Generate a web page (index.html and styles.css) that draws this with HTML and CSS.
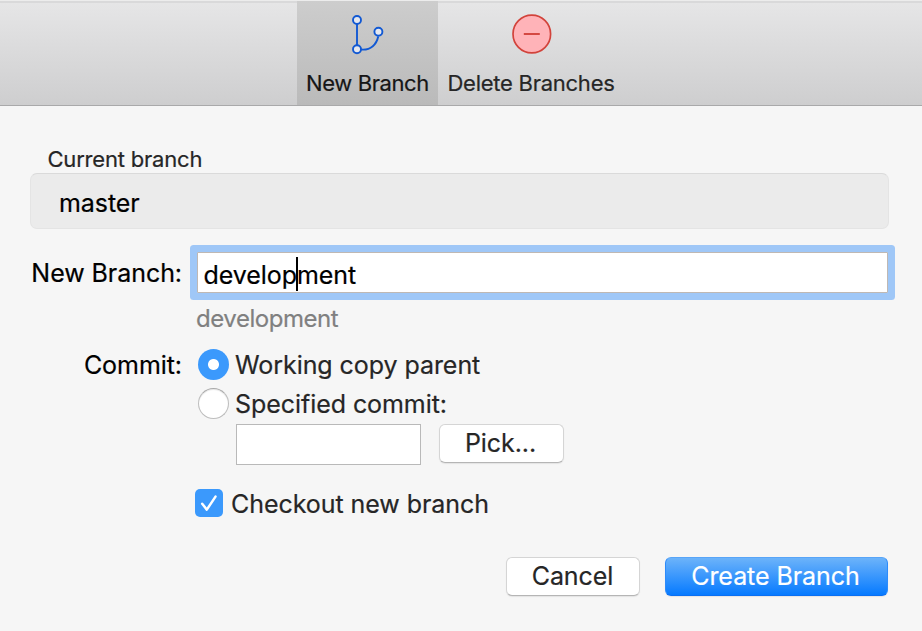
FILE: index.html
```html
<!DOCTYPE html>
<html lang="en">
<head>
<meta charset="utf-8">
<title>New Branch</title>
<link rel="stylesheet" href="styles.css">
</head>
<body>
<header class="toolbar">
  <div class="tab tab-active">
    <svg class="tab-icon" width="40" height="40" viewBox="0 0 40 40" fill="none" stroke="#1259d3" stroke-width="1.9">
      <path d="M9 9.5V34"/>
      <path d="M13 38.5C23 39.5 28.7 33 30.2 25.5"/>
      <g fill="#e6e8ee"><circle cx="9" cy="9" r="4"/><circle cx="9" cy="38.3" r="4"/><circle cx="30.4" cy="20.8" r="4"/></g>
    </svg>
    <span class="tab-label new-label">New Branch</span>
  </div>
  <div class="tab tab-delete">
    <svg class="tab-icon" width="40" height="40" viewBox="0 0 40 40" stroke="#d2433b">
      <circle cx="20.8" cy="20" r="18.8" fill="#ffb3b8" stroke-width="1.7"/>
      <path d="M12.8 20H28.8" stroke-width="1.9"/>
    </svg>
    <span class="tab-label delete-label">Delete Branches</span>
  </div>
</header>
<main class="form">
  <div class="current-label">Current branch</div>
  <div class="current-box"><span class="master">master</span></div>
  <div class="row name-row">
    <div class="label name-label">New Branch:</div>
    <div class="field name-field"><span class="typed">develop<i class="caret"></i>ment</span></div>
  </div>
  <div class="hint">development</div>
  <div class="row">
    <div class="label commit-label">Commit:</div>
    <div class="radio radio-on"></div>
    <div class="option working">Working copy parent</div>
  </div>
  <div class="row second">
    <div class="label"></div>
    <div class="radio"></div>
    <div class="option specified">Specified commit:</div>
  </div>
  <div class="pick-row">
    <div class="field commit-field"></div>
    <div class="button pick"><span>Pick...</span></div>
  </div>
  <div class="check-row">
    <div class="checkbox">
      <svg width="28" height="28" viewBox="0 0 28 28" fill="none" stroke="#fff" stroke-width="2.5" stroke-linecap="round" stroke-linejoin="round"><path d="M7.2 14.8L11.8 20.6L20.5 7.6"/></svg>
    </div>
    <div class="option checkout">Checkout new branch</div>
  </div>
  <div class="actions">
    <div class="button cancel"><span>Cancel</span></div>
    <div class="button create"><span>Create Branch</span></div>
  </div>
</main>
</body>
</html>
```
FILE: styles.css
```css
* { box-sizing: border-box; }
body {
  margin: 0;
  width: 922px;
  height: 631px;
  overflow: hidden;
  background: #f6f6f6;
  font-family: Inter, "Liberation Sans", sans-serif;
  font-size: 25px;
  line-height: 32px;
  letter-spacing: -0.06px;
  -webkit-text-stroke: 0.2px;
  color: #262626;
  white-space: nowrap;
}
.toolbar {
  display: flex;
  height: 106px;
  padding-left: 297px;
  background: linear-gradient(#e6e6e7, #cececf);
  border-top: 1px solid #ececec;
  border-bottom: 1px solid #a9a9aa;
  box-shadow: inset 0 2px 0 #d9d9da;
}
.tab {
  display: flex;
  flex-direction: column;
  align-items: center;
  width: 141px;
  padding-top: 13px;
}
.tab-active { background: linear-gradient(#cdcdcd, #bababa); }
.tab-delete { width: 186px; }
.tab-icon { overflow: visible; }
.tab-active .tab-icon { margin-top: -3px; margin-bottom: 3px; }
.tab-label {
  margin-top: 16px;
  font-size: 22px;
  line-height: 26px;
  letter-spacing: -0.25px;
}
.new-label { color: #161616; letter-spacing: -0.4px; }
.form { padding-top: 40px; }
.current-label {
  padding-left: 47.5px;
  font-size: 22px;
  line-height: 26px;
  letter-spacing: -0.2px;
}
.current-box {
  display: flex;
  align-items: center;
  width: 859px;
  height: 56px;
  margin: 1px 0 0 30px;
  padding: 4px 0 0 28px;
  background: #ebebeb;
  border: 1px solid #e4e4e4;
  border-top-color: #dadada;
  border-radius: 7px;
  color: #000;
}
.row { display: flex; align-items: center; }
.label {
  width: 182px;
  text-align: right;
  color: #000;
}
.name-row { margin-top: 23px; }
.field { background: #fff; border: 1px solid #b9b9b9; }
.name-field {
  width: 691px;
  height: 41px;
  margin-left: 15px;
  padding: 6px 0 0 6px;
  border-color: #bfb8b3;
  box-shadow: 0 0 0 7px #9fc7f7;
  border-radius: 1px;
  color: #000;
}
.typed { margin-left: -0.5px; }
.caret {
  position: relative;
  top: -3px;
  display: inline-block;
  width: 2px;
  height: 34px;
  margin: -6px -1px;
  background: #000;
  vertical-align: middle;
}
.hint {
  margin: 11px 0 13px 196px;
  font-size: 24px;
  line-height: 30px;
  letter-spacing: -0.45px;
  color: #808080;
}
.commit-label, .working, .specified, .checkout { padding-top: 2px; }
.radio {
  width: 31px;
  height: 31px;
  margin: 0 6px 0 16px;
  border-radius: 50%;
  background: #fff;
  border: 1px solid #bdbdbd;
  border-top-color: #a9a9a9;
  box-shadow: inset 0 1px 1px #e6e6e6;
}
.radio-on {
  background: radial-gradient(circle, #fff 5px, #3b99fc 6px);
  border: 0;
  box-shadow: none;
}
.second { margin-top: 5px; }
.pick-row {
  display: flex;
  gap: 18px;
  margin: 4px 0 0 236px;
}
.commit-field { width: 185px; height: 41px; }
.button {
  display: flex;
  align-items: center;
  justify-content: center;
  height: 39px;
  background: #fff;
  border: 1px solid #d5d5d5;
  border-bottom-color: #b5b5b5;
  border-radius: 6px;
  box-shadow: 0 1px 1px #e4e4e4;
}
.pick { width: 125px; padding: 0 2px 1px 0; }
.check-row {
  display: flex;
  align-items: center;
  margin: 21px 0 0 195px;
}
.checkbox {
  display: flex;
  width: 28px;
  height: 28px;
  margin-right: 8px;
  background: #3b99fc;
  border-radius: 5px;
}
.actions {
  display: flex;
  gap: 25px;
  margin: 37px 0 0 506px;
}
.cancel { width: 134px; padding: 0 1px 1px 0; }
.create {
  width: 223px;
  padding: 0 2px 1px 0;
  background: linear-gradient(#6cb3fa, #067aff);
  border-color: #58a5f8 #2d8bfb #0a6ff2;
  color: #fff;
}
```
